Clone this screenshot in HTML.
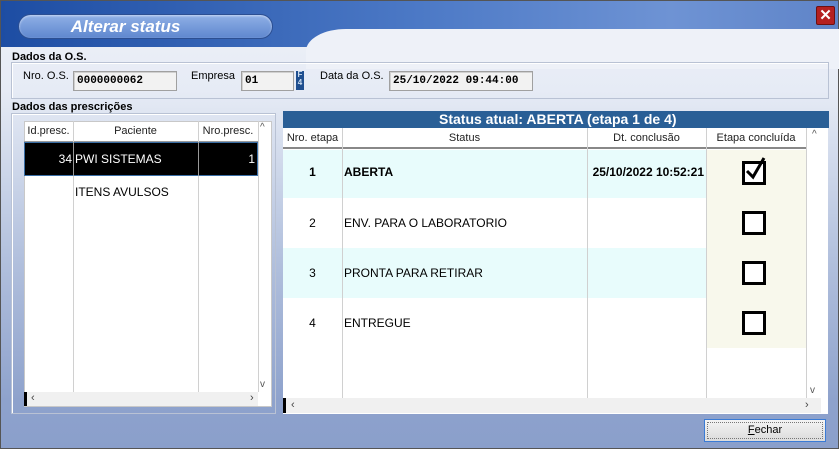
<!DOCTYPE html>
<html><head><style>
*{margin:0;padding:0;box-sizing:border-box}
body{width:839px;height:449px;overflow:hidden;font-family:"Liberation Sans",Arial,sans-serif;font-size:11px;color:#000}
.win{position:absolute;left:0;top:0;width:839px;height:449px;border:1px solid #555;background:linear-gradient(#eef1f8 0px,#e6ebf5 90px,#b4c2de 250px,#8ea2cc 400px,#8a9fcb 449px)}
.a{position:absolute}
.title{left:0;top:0;width:837px;height:46px;background:linear-gradient(90deg,#1d4da3,#4c79c6 50%,#6e93d4 80%,#5f84c8)}
.curve{left:305px;top:28px;width:545px;height:40px;background:#eef1f8;border-radius:40px 0 0 0/22px 0 0 0}
.pill{left:17px;top:13px;width:255px;height:25px;border-radius:13px;background:linear-gradient(#8fb0e6,#5f87cf);border:1px solid #2c4f92;box-shadow:inset 0 1px 2px #c8d8f4;color:#fff;font-style:italic;font-weight:bold;font-size:17px;text-align:center;line-height:23px;padding-right:40px}
.close{left:815px;top:5px;width:19px;height:19px;background:#b42020;border:1px solid #6e1010;border-radius:2px;color:#fff;font-weight:bold;font-size:15px;text-align:center;line-height:17px}
.lbl{font-weight:bold;font-size:11px}
.grp{border:1px solid #b9c2d4;box-shadow:inset 1px 1px 0 #fff}
.in{background:#f2f2f2;border:1px solid #a0a0a0;box-shadow:inset 1px 1px 0 #d0d0d0;font-family:"Liberation Mono",monospace;font-weight:bold;font-size:11px;padding:3px 0 0 3px;height:20px}
.t{font-size:11px}
.vl{position:absolute;width:1px;background:#d0d0d0}
.hd{position:absolute;text-align:center;font-size:11px;color:#222}
.cb{position:absolute;width:24px;height:24px;border:3px solid #000;background:#fff}
.r{font-size:12px}
</style></head><body>
<div class="win">
<div class="a title"></div>
<div class="a curve"></div>
<div class="a pill">Alterar status</div>
<div class="a close">✕</div>

<div class="a lbl" style="left:11px;top:50px">Dados da O.S.</div>
<div class="a grp" style="left:10px;top:61px;width:818px;height:37px"></div>
<div class="a t" style="left:22px;top:69px">Nro. O.S.</div>
<div class="a in" style="left:72px;top:70px;width:104px">0000000062</div>
<div class="a t" style="left:190px;top:69px">Empresa</div>
<div class="a in" style="left:240px;top:70px;width:53px">01</div>
<div class="a" style="left:295px;top:70px;width:8px;height:19px;background:#1f4f8f;color:#cde;font-size:8px;font-weight:bold;line-height:8px;text-align:center">F<br>4</div>
<div class="a t" style="left:319px;top:69px">Data da O.S.</div>
<div class="a in" style="left:388px;top:70px;width:144px">25/10/2022 09:44:00</div>

<div class="a lbl" style="left:11px;top:100px">Dados das prescrições</div>
<div class="a grp" style="left:10px;top:112px;width:265px;height:301px"></div>
<div class="a" style="left:23px;top:120px;width:248px;height:286px;background:#fff;border:1px solid #c8c8c8"></div>
<div class="a" style="left:23px;top:120px;width:234px;height:21px;border-bottom:1px solid #999"></div>
<div class="hd" style="left:23px;top:124px;width:49px">Id.presc.</div>
<div class="hd" style="left:72px;top:124px;width:125px">Paciente</div>
<div class="hd" style="left:197px;top:124px;width:60px">Nro.presc.</div>
<div class="a" style="left:259px;top:121px;font-size:10px;color:#555">^</div>
<div class="vl" style="left:72px;top:120px;height:271px"></div>
<div class="vl" style="left:197px;top:120px;height:271px"></div>
<div class="vl" style="left:257px;top:120px;height:271px"></div>
<div class="a" style="left:23px;top:141px;width:234px;height:34px;background:#000;border:1px solid #3a6ea5"></div>
<div class="a" style="left:72px;top:141px;width:1px;height:34px;background:#999"></div>
<div class="a" style="left:197px;top:141px;width:1px;height:34px;background:#999"></div>
<div class="a r" style="left:23px;top:151px;width:48px;text-align:right;color:#fff">34</div>
<div class="a r" style="left:74px;top:151px;color:#fff">PWI SISTEMAS</div>
<div class="a r" style="left:197px;top:151px;width:57px;text-align:right;color:#fff">1</div>
<div class="a r" style="left:74px;top:184px">ITENS AVULSOS</div>
<div class="a" style="left:259px;top:378px;font-size:10px;color:#555">v</div>
<div class="a" style="left:23px;top:391px;width:234px;height:14px;background:#f0f0f0;border-left:3px solid #000"></div>
<div class="a" style="left:30px;top:391px;font-size:11px;color:#444">‹</div>
<div class="a" style="left:249px;top:391px;font-size:11px;color:#444">›</div>

<div class="a" style="left:282px;top:110px;width:546px;height:17px;background:#2a5f96;color:#fff;font-weight:bold;font-size:14px;line-height:17px;padding-left:156px">Status atual: ABERTA (etapa 1 de 4)</div>
<div class="a" style="left:282px;top:127px;width:545px;height:286px;background:#fff"></div>
<div class="a" style="left:282px;top:127px;width:523px;height:21px;border-bottom:2px solid #888"></div>
<div class="hd" style="left:282px;top:131px;width:59px">Nro. etapa</div>
<div class="hd" style="left:341px;top:131px;width:245px">Status</div>
<div class="hd" style="left:586px;top:131px;width:119px">Dt. conclusão</div>
<div class="hd" style="left:705px;top:131px;width:100px">Etapa concluída</div>
<div class="a" style="left:811px;top:128px;font-size:10px;color:#555">^</div>
<div class="a" style="left:282px;top:149px;width:423px;height:48px;background:#e8fcfc"></div>
<div class="a" style="left:282px;top:247px;width:423px;height:50px;background:#e8fcfc"></div>
<div class="a" style="left:705px;top:149px;width:100px;height:198px;background:#f8f8ec"></div>
<div class="vl" style="left:341px;top:127px;height:270px"></div>
<div class="vl" style="left:586px;top:127px;height:270px"></div>
<div class="vl" style="left:705px;top:127px;height:270px"></div>
<div class="vl" style="left:805px;top:127px;height:270px"></div>
<div class="a" style="left:282px;top:164px;width:59px;text-align:center;font-weight:bold;font-size:12px">1</div>
<div class="a" style="left:343px;top:164px;font-weight:bold;font-size:12px">ABERTA</div>
<div class="a" style="left:586px;top:164px;width:117px;text-align:right;font-weight:bold;font-size:12px">25/10/2022 10:52:21</div>
<div class="a r" style="left:282px;top:215px;width:59px;text-align:center">2</div>
<div class="a r" style="left:343px;top:215px">ENV. PARA O LABORATORIO</div>
<div class="a r" style="left:282px;top:265px;width:59px;text-align:center">3</div>
<div class="a r" style="left:343px;top:265px">PRONTA PARA RETIRAR</div>
<div class="a r" style="left:282px;top:315px;width:59px;text-align:center">4</div>
<div class="a r" style="left:343px;top:315px">ENTREGUE</div>
<div class="cb" style="left:741px;top:160px"><svg width="20" height="20" style="position:absolute;left:0px;top:-6px;overflow:visible"><path d="M2 13 L8 19 L19 0" stroke="#000" stroke-width="3" fill="none"/></svg></div>
<div class="cb" style="left:741px;top:210px"></div>
<div class="cb" style="left:741px;top:260px"></div>
<div class="cb" style="left:741px;top:310px"></div>
<div class="a" style="left:809px;top:384px;font-size:10px;color:#555">v</div>
<div class="a" style="left:282px;top:397px;width:538px;height:15px;background:#f0f0f0;border-left:3px solid #000"></div>
<div class="a" style="left:290px;top:398px;font-size:11px;color:#444">‹</div>
<div class="a" style="left:804px;top:398px;font-size:11px;color:#444">›</div>

<div class="a" style="left:703px;top:418px;width:122px;height:23px;border:1px solid #3a7bd5;background:linear-gradient(#f4f4f4,#dcdcdc);text-align:center;line-height:20px;font-size:11px"><div style="position:absolute;inset:2px;border:1px dotted #777"></div><u>F</u>echar</div>
</div>
</body></html>
